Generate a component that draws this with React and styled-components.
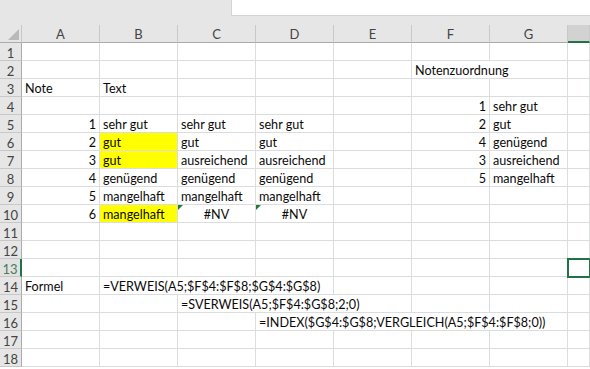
import React from 'react';
import styled, { createGlobalStyle } from 'styled-components';

const COLS = ['A', 'B', 'C', 'D', 'E', 'F', 'G', 'H'];
const ROW_COUNT = 18;

// cell contents, keyed by address
const cells = {
  F2: { text: 'Notenzuordnung', span: 2 },
  A3: { text: 'Note' },
  B3: { text: 'Text' },
  F4: { text: '1', num: true },
  G4: { text: 'sehr gut' },
  A5: { text: '1', num: true },
  B5: { text: 'sehr gut' },
  C5: { text: 'sehr gut' },
  D5: { text: 'sehr gut' },
  F5: { text: '2', num: true },
  G5: { text: 'gut' },
  A6: { text: '2', num: true },
  B6: { text: 'gut', fill: '#ffff00' },
  C6: { text: 'gut' },
  D6: { text: 'gut' },
  F6: { text: '4', num: true },
  G6: { text: 'genügend' },
  A7: { text: '3', num: true },
  B7: { text: 'gut', fill: '#ffff00' },
  C7: { text: 'ausreichend' },
  D7: { text: 'ausreichend' },
  F7: { text: '3', num: true },
  G7: { text: 'ausreichend' },
  A8: { text: '4', num: true },
  B8: { text: 'genügend' },
  C8: { text: 'genügend' },
  D8: { text: 'genügend' },
  F8: { text: '5', num: true },
  G8: { text: 'mangelhaft' },
  A9: { text: '5', num: true },
  B9: { text: 'mangelhaft' },
  C9: { text: 'mangelhaft' },
  D9: { text: 'mangelhaft' },
  A10: { text: '6', num: true },
  B10: { text: 'mangelhaft', fill: '#ffff00' },
  C10: { text: '#NV', center: true, flag: true },
  D10: { text: '#NV', center: true, flag: true },
  A14: { text: 'Formel' },
  B14: { text: '=VERWEIS(A5;$F$4:$F$8;$G$4:$G$8)', span: 3 },
  C15: { text: '=SVERWEIS(A5;$F$4:$G$8;2;0)', span: 3 },
  D16: { text: '=INDEX($G$4:$G$8;VERGLEICH(A5;$F$4:$F$8;0))', span: 4 },
};

const ACTIVE = 'H13';

const GlobalStyle = createGlobalStyle`
  html, body {
    margin: 0;
    padding: 0;
    background: #fff;
    overflow: hidden;
  }
  body {
    font-family: Lato, "Liberation Sans", sans-serif;
  }
`;

const Window = styled.div`
  width: 590px;
  height: 369px;
  overflow: hidden;
  background: #fff;
`;

const FormulaStrip = styled.div`
  height: 25px;
  background: #e6e6e6;
  display: flex;
  align-items: flex-start;
`;

const FormulaBox = styled.div`
  margin-left: 231px;
  flex: 1;
  height: 15px;
  background: #fff;
  border-left: 1px solid #d4d4d4;
  border-bottom: 1px solid #d4d4d4;
`;

const Sheet = styled.div`
  display: grid;
  grid-template-columns: 22px repeat(7, 78px) 1fr;
  grid-auto-rows: 18px;
  font-size: 12.6px;
  color: #0a0a0a;
`;

const Corner = styled.div`
  position: relative;
  background: #e6e6e6;
  border-right: 1px solid #c8c8c8;
  border-bottom: 1px solid #ababab;

  &::after {
    content: '';
    position: absolute;
    right: 2px;
    bottom: 2px;
    border-style: solid;
    border-width: 0 0 11px 11px;
    border-color: transparent transparent #b9b9b9 transparent;
  }
`;

const ColHead = styled.div`
  display: flex;
  align-items: center;
  justify-content: center;
  background: ${(p) => (p.$active ? '#d2d2d2' : '#e6e6e6')};
  border-right: 1px solid #c8c8c8;
  border-bottom: ${(p) => (p.$active ? '2px solid #217346' : '1px solid #ababab')};
  color: #444;
  font-size: 13px;
  padding-top: 1px;
`;

const RowHead = styled.div`
  display: flex;
  align-items: center;
  justify-content: center;
  background: ${(p) => (p.$active ? '#e1e1e1' : '#e6e6e6')};
  border-right: ${(p) => (p.$active ? '2px solid #217346' : '1px solid #ababab')};
  border-bottom: 1px solid #c8c8c8;
  color: ${(p) => (p.$active ? '#4a7a5c' : '#444')};
  font-size: 13px;
  padding-top: 2px;
`;

const Cell = styled.div`
  position: relative;
  grid-column: span ${(p) => p.$span};
  display: flex;
  align-items: flex-end;
  justify-content: ${(p) => (p.$num ? 'flex-end' : p.$center ? 'center' : 'flex-start')};
  padding: 0 3px 0 3px;
  background: ${(p) => p.$fill || '#fff'};
  border-right: 1px solid #dadcdd;
  border-bottom: 1px solid #dadcdd;
  white-space: nowrap;
  overflow: hidden;
  line-height: 14px;
  outline: ${(p) => (p.$active ? '2px solid #217346' : 'none')};
  outline-offset: -1px;
  z-index: ${(p) => (p.$active ? 1 : 0)};
`;

const ErrorFlag = styled.span`
  position: absolute;
  left: 0;
  top: 0;
  border-style: solid;
  border-width: 5px 5px 0 0;
  border-color: #1e7b3c transparent transparent transparent;
`;

function Row({ n }) {
  const out = [
    <RowHead key="h" $active={n === 13}>
      {n}
    </RowHead>,
  ];
  let skip = 0;
  COLS.forEach((c) => {
    if (skip > 0) {
      skip -= 1;
      return;
    }
    const addr = c + n;
    const data = cells[addr] || {};
    const span = data.span || 1;
    skip = span - 1;
    out.push(
      <Cell
        key={addr}
        $span={span}
        $num={data.num}
        $center={data.center}
        $fill={data.fill}
        $active={addr === ACTIVE}
      >
        {data.flag && <ErrorFlag />}
        {data.text}
      </Cell>
    );
  });
  return out;
}

export default function App() {
  const rows = Array.from({ length: ROW_COUNT }, (_, i) => i + 1);
  return (
    <Window>
      <GlobalStyle />
      <FormulaStrip>
        <FormulaBox />
      </FormulaStrip>
      <Sheet>
        <Corner />
        {COLS.map((c) => (
          <ColHead key={c} $active={c === 'H'}>
            {c === 'H' ? '' : c}
          </ColHead>
        ))}
        {rows.map((n) => (
          <Row key={n} n={n} />
        ))}
      </Sheet>
    </Window>
  );
}
